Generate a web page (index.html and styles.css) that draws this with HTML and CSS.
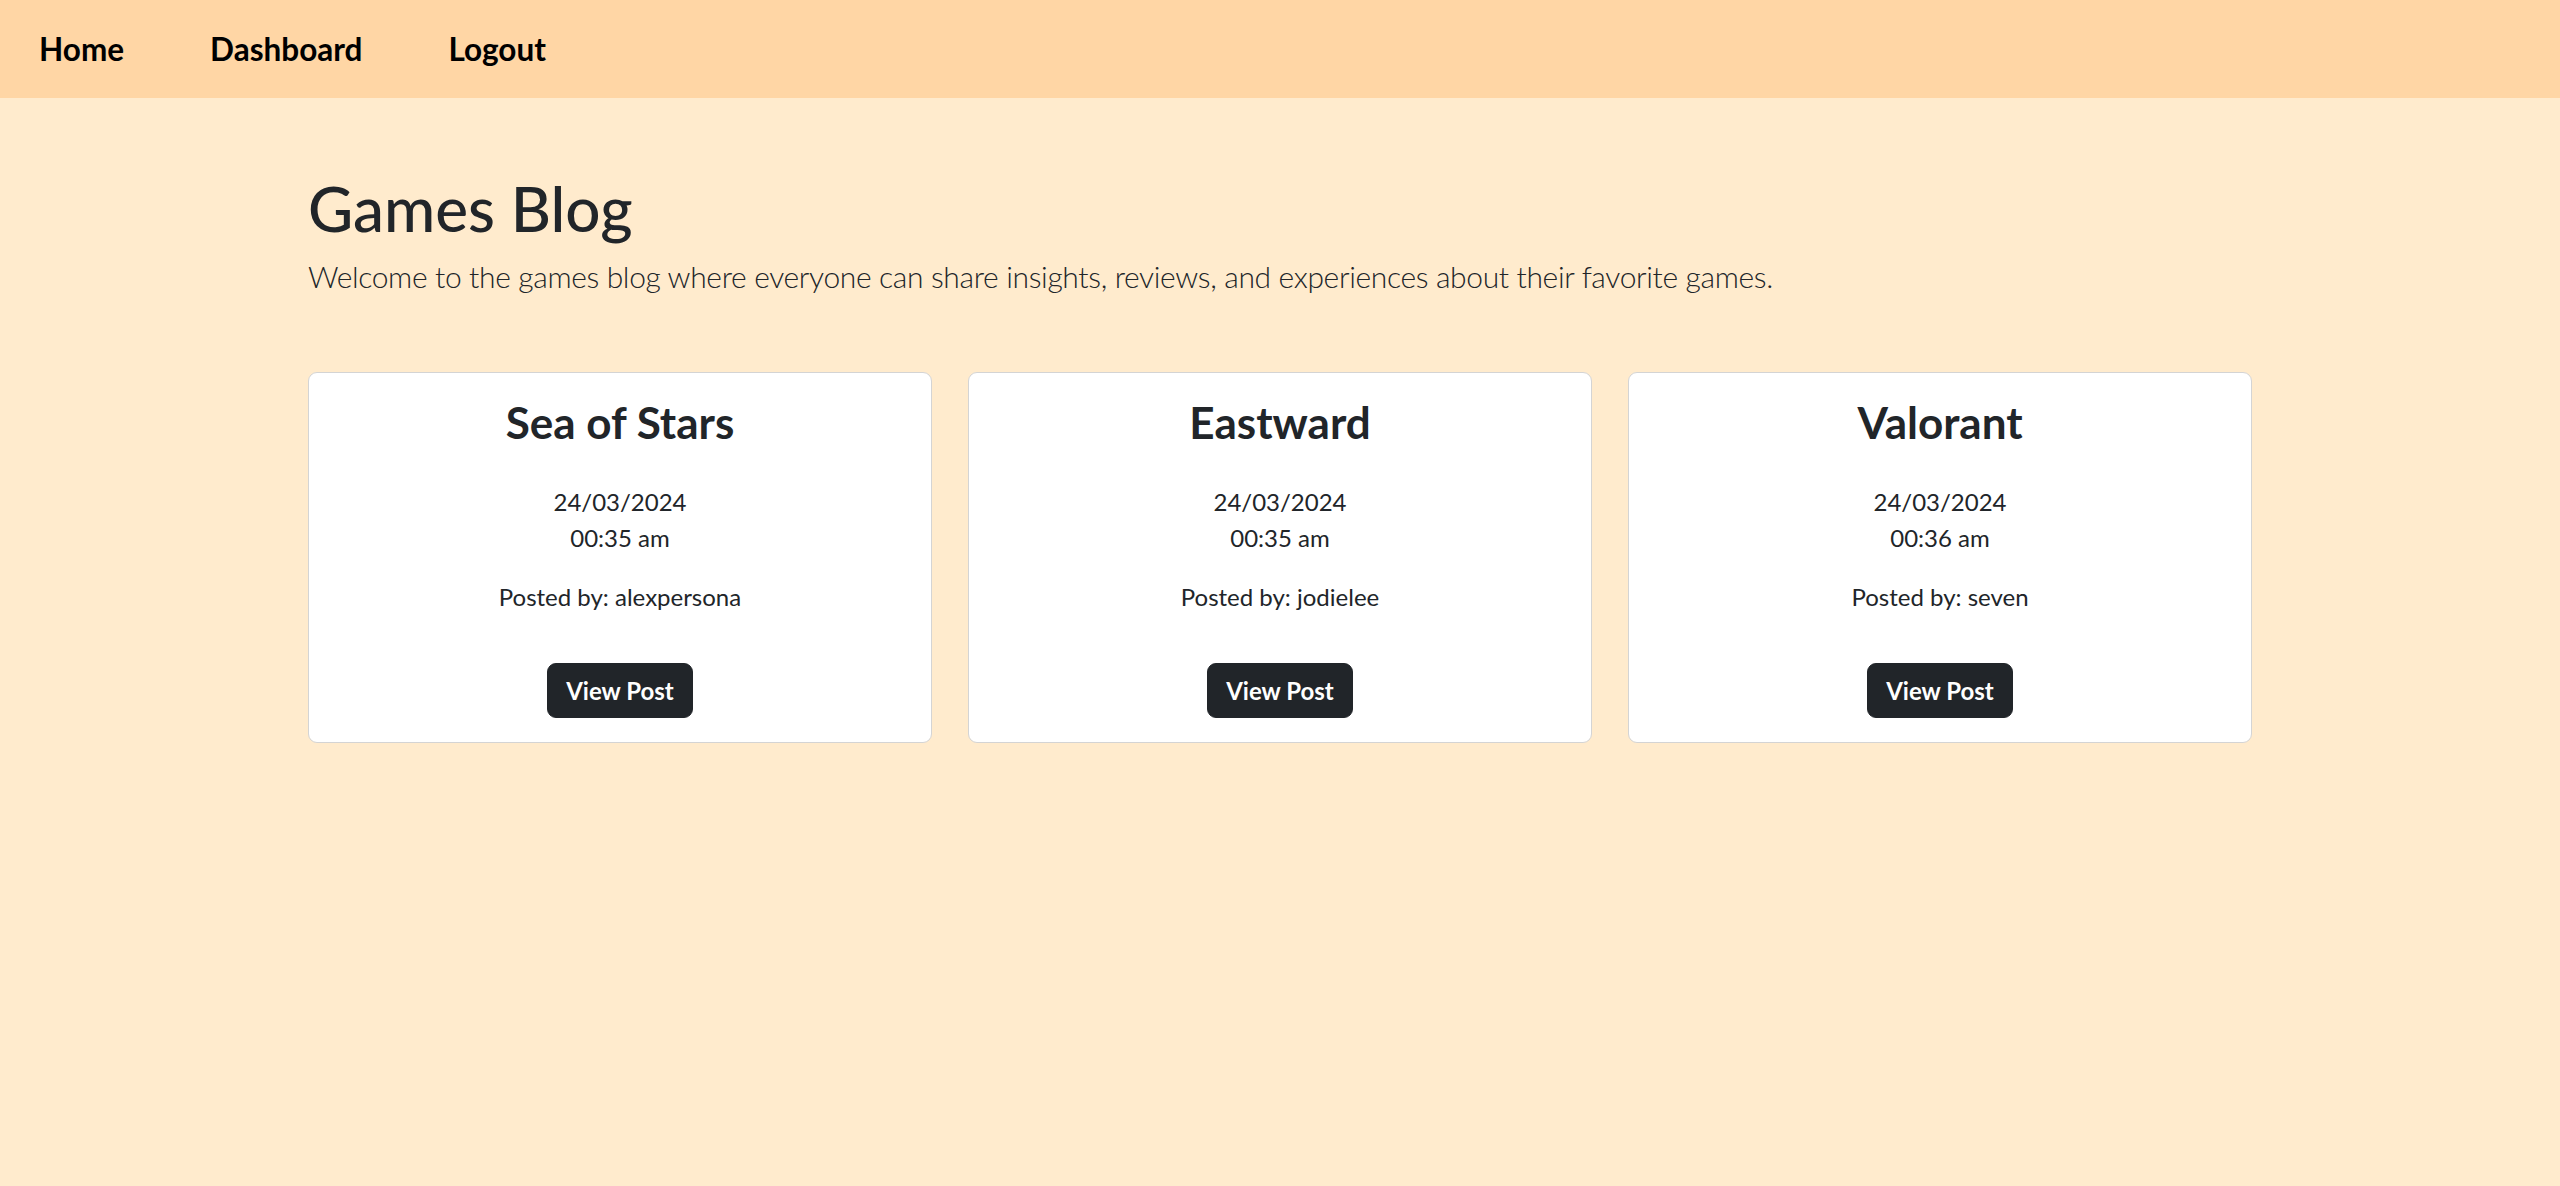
FILE: index.html
```html
<!DOCTYPE html>
<html lang="en">
<head>
<meta charset="utf-8">
<title>Games Blog</title>
<link rel="stylesheet" href="styles.css">
</head>
<body>
<nav class="navbar">
  <a class="nav-link" href="#">Home</a>
  <a class="nav-link" href="#">Dashboard</a>
  <a class="nav-link" href="#">Logout</a>
</nav>
<main class="container">
  <h1 class="page-title">Games Blog</h1>
  <p class="lead">Welcome to the games blog where everyone can share insights, reviews, and experiences about their favorite games.</p>
  <div class="cards">
    <div class="card">
      <h3 class="card-title">Sea of Stars</h3>
      <p class="meta">24/03/2024<br>00:35 am</p>
      <p class="author">Posted by: alexpersona</p>
      <a class="btn" href="#">View Post</a>
    </div>
    <div class="card">
      <h3 class="card-title">Eastward</h3>
      <p class="meta">24/03/2024<br>00:35 am</p>
      <p class="author">Posted by: jodielee</p>
      <a class="btn" href="#">View Post</a>
    </div>
    <div class="card">
      <h3 class="card-title">Valorant</h3>
      <p class="meta">24/03/2024<br>00:36 am</p>
      <p class="author">Posted by: seven</p>
      <a class="btn" href="#">View Post</a>
    </div>
  </div>
</main>
</body>
</html>
```
FILE: styles.css
```css
* { box-sizing: border-box; }
body {
  margin: 0;
  background: #ffebcd;
  color: #212529;
  font-family: Lato, "Open Sans", sans-serif;
  font-size: 24px;
  line-height: 1.5;
}
.navbar {
  height: 98px;
  background: #ffd6a5;
  display: flex;
  align-items: center;
  gap: 86px;
  padding-left: 39px;
}
.nav-link {
  color: #000;
  text-decoration: none;
  font-weight: 700;
  font-size: 31.5px;
  line-height: 45px;
}
.container {
  width: 1944px;
  margin: 0 auto;
  padding-top: 74px;
}
.page-title {
  margin: 0 0 10px;
  font-size: 62px;
  font-weight: 500;
  line-height: 72px;
}
.lead {
  margin: 0 0 73px;
  font-size: 30px;
  font-weight: 300;
  line-height: 45px;
  letter-spacing: -0.35px;
}
.cards {
  display: grid;
  grid-template-columns: repeat(3, 1fr);
  gap: 36px;
}
.card {
  background: #fff;
  border: 1px solid #d4d4d4;
  border-radius: 9px;
  padding: 24px;
  display: flex;
  flex-direction: column;
  align-items: center;
  text-align: center;
}
.card-title {
  margin: 0 0 37px;
  font-size: 44px;
  font-weight: 700;
  line-height: 50.4px;
}
.meta {
  margin: 0 0 23px;
}
.author {
  margin: 0 0 48px;
}
.btn {
  display: block;
  background: #212529;
  color: #fff;
  text-decoration: none;
  font-weight: 700;
  line-height: 35px;
  padding: 9px 18px;
  border: 1px solid #212529;
  border-radius: 9px;
}
```
